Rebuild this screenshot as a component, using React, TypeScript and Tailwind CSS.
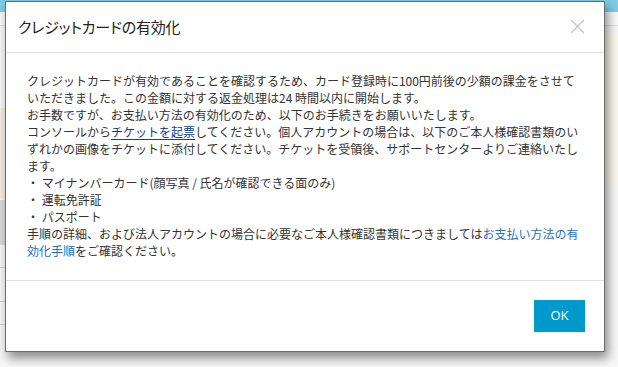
import React from "react";

export default function App() {
  const jp = "font-['Noto_Sans_CJK_JP','Noto_Sans',sans-serif]";
  return (
    <div className={`relative w-[618px] h-[367px] overflow-hidden bg-[#f7f7f7] ${jp}`}>
      {/* background page */}
      <div className="flex flex-col h-full">
        <div className="h-[12px] bg-[#7fcbe6]" />
        <div className="h-[13px] bg-[#fafafa]" />
        <div className="h-px bg-[#dedede]" />
        <div className="flex flex-1">
          <div className="w-[300px] flex flex-col">
            <div className="h-[82px]" />
            <div className="h-[90px] bg-[#f3eee2]" />
            <div className="h-[2px]" />
            <div className="h-[45px] bg-[#d9d9d9]" />
            <div className="h-[22px]" />
            <div className="h-px bg-[#cfcfcf]" />
            <div className="h-[33px]" />
            <div className="h-px bg-[#cfcfcf]" />
            <div className="h-[22px]" />
            <div className="h-px bg-[#cfcfcf]" />
          </div>
          <div className="flex-1 flex flex-col">
            <div className="h-[7px]" />
            <div className="h-[150px] bg-[#fbf8ee]" />
          </div>
        </div>
      </div>

      {/* modal */}
      <div className="absolute left-[5px] top-[1px] w-[600px] h-[351px] bg-white border border-[#6e6e6e] shadow-[3px_6px_10px_rgba(0,0,0,0.45)] flex flex-col">
        <div className="h-[51px] shrink-0 flex items-center justify-between pl-[12px] pr-[19px] border-b border-[#e3e3e3]">
          <div className="text-[15px] text-[#222] [font-feature-settings:'palt'] tracking-[-0.2px]">
            クレジットカードの有効化
          </div>
          <svg width="15" height="15" viewBox="0 0 15 15" className="mt-[-1px]">
            <path d="M1 1 L14 14 M14 1 L1 14" stroke="#c6c6c6" strokeWidth="1.4" />
          </svg>
        </div>
        <div className="h-[228px] shrink-0 pt-[19px] px-[21px] text-[12px] leading-[17px] text-[#333] border-b border-[#e3e3e3]">
          <p>
            クレジットカードが有効であることを確認するため、カード登録時に100円前後の少額の課金をさせていただきました。この金額に対する返金処理は24 時間以内に開始します。
          </p>
          <p>お手数ですが、お支払い方法の有効化のため、以下のお手続きをお願いいたします。</p>
          <p>
            コンソールから<span className="text-[#0b3f91] underline underline-offset-2">チケットを起票</span>してください。個人アカウントの場合は、以下のご本人様確認書類のいずれかの画像をチケットに添付してください。チケットを受領後、サポートセンターよりご連絡いたします。
          </p>
          <p>・ マイナンバーカード(顔写真 / 氏名が確認できる面のみ)</p>
          <p>・ 運転免許証</p>
          <p>・ パスポート</p>
          <p>
            手順の詳細、および法人アカウントの場合に必要なご本人様確認書類につきましては<span className="text-[#1f6fc5]">お支払い方法の有効化手順</span>をご確認ください。
          </p>
        </div>
        <div className="flex-1 flex items-start justify-end pt-[19px] pr-[19px]">
          <button className="w-[51px] h-[32px] bg-[#0099cc] text-white text-[13px] font-['Open_Sans','Noto_Sans',sans-serif]">
            OK
          </button>
        </div>
      </div>
    </div>
  );
}
